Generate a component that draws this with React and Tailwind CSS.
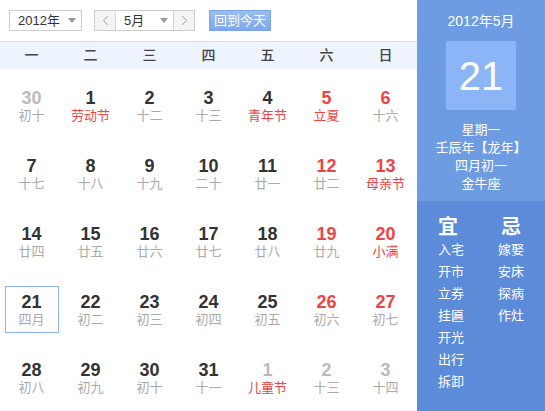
import React from 'react';
import { ChevronLeft, ChevronRight } from 'lucide-react';

const FONT = { fontFamily: '"Liberation Sans", Arial, "Noto Sans CJK SC", sans-serif' };

const weekDays = ['一', '二', '三', '四', '五', '六', '日'];

// n: 日期, l: 农历/节日, o: 非本月, r: 周末红色, f: 节日红色
const weeks = [
  [
    { n: 30, l: '初十', o: true },
    { n: 1, l: '劳动节', f: true },
    { n: 2, l: '十二' },
    { n: 3, l: '十三' },
    { n: 4, l: '青年节', f: true },
    { n: 5, l: '立夏', r: true, f: true },
    { n: 6, l: '十六', r: true },
  ],
  [
    { n: 7, l: '十七' },
    { n: 8, l: '十八' },
    { n: 9, l: '十九' },
    { n: 10, l: '二十' },
    { n: 11, l: '廿一' },
    { n: 12, l: '廿二', r: true },
    { n: 13, l: '母亲节', r: true, f: true },
  ],
  [
    { n: 14, l: '廿四' },
    { n: 15, l: '廿五' },
    { n: 16, l: '廿六' },
    { n: 17, l: '廿七' },
    { n: 18, l: '廿八' },
    { n: 19, l: '廿九', r: true },
    { n: 20, l: '小满', r: true, f: true },
  ],
  [
    { n: 21, l: '四月', sel: true },
    { n: 22, l: '初二' },
    { n: 23, l: '初三' },
    { n: 24, l: '初四' },
    { n: 25, l: '初五' },
    { n: 26, l: '初六', r: true },
    { n: 27, l: '初七', r: true },
  ],
  [
    { n: 28, l: '初八' },
    { n: 29, l: '初九' },
    { n: 30, l: '初十' },
    { n: 31, l: '十一' },
    { n: 1, l: '儿童节', o: true, f: true },
    { n: 2, l: '十三', o: true },
    { n: 3, l: '十四', o: true },
  ],
];

const yi = ['入宅', '开市', '立券', '挂匾', '开光', '出行', '拆卸'];
const ji = ['嫁娶', '安床', '探病', '作灶'];

const Arrow = () => (
  <span className="w-0 h-0 border-l-[4px] border-r-[4px] border-t-[5px] border-l-transparent border-r-transparent border-t-[#999]" />
);

const DayCell = ({ d }) => {
  const numColor = d.o ? 'text-[#bbbbbb]' : d.r ? 'text-[#ee4444]' : 'text-[#333333]';
  const lunarColor = d.f ? 'text-[#ee4444]' : 'text-[#aaaaaa]';
  return (
    <div className="flex items-center justify-center">
      <div
        className={`w-[54px] h-[47px] flex flex-col items-center pt-[5px] ${
          d.sel ? 'border border-[#8db4f0]' : 'border border-transparent'
        }`}
      >
        <span className={`text-[18px] leading-[20px] font-bold ${numColor}`}>{d.n}</span>
        <span className={`text-[13px] leading-[16px] ${lunarColor}`}>{d.l}</span>
      </div>
    </div>
  );
};

export default function App() {
  return (
    <div className="w-[545px] h-[411px] flex bg-white overflow-hidden" style={FONT}>
      {/* 左侧日历 */}
      <div className="w-[417px] flex flex-col">
        <div className="h-[43px] flex items-center pl-[9px] border-b border-[#d9dde5]">
          <div className="w-[73px] h-[21px] border border-[#cccccc] flex items-center justify-between pl-[8px] pr-[5px] text-[13px] text-[#333]">
            <span>2012年</span>
            <Arrow />
          </div>
          <div className="ml-[12px] h-[21px] flex border border-[#cccccc]">
            <div className="w-[21px] flex items-center justify-center bg-[#f4f4f4] border-r border-[#d6d6d6] text-[#999]">
              <ChevronLeft size={17} strokeWidth={1.3} />
            </div>
            <div className="w-[57px] flex items-center justify-between pl-[8px] pr-[5px] text-[13px] text-[#333] bg-white">
              <span>5月</span>
              <Arrow />
            </div>
            <div className="w-[21px] flex items-center justify-center bg-[#f4f4f4] border-l border-[#d6d6d6] text-[#999]">
              <ChevronRight size={17} strokeWidth={1.3} />
            </div>
          </div>
          <div className="ml-[14px] w-[62px] h-[21px] flex items-center justify-center bg-gradient-to-b from-[#9bbdf2] to-[#7ea8ec] border border-[#79a3e6] text-white text-[13px]">
            回到今天
          </div>
        </div>

        <div className="h-[27px] bg-[#eef4fd] pl-[2px] grid grid-cols-[repeat(7,59px)] items-center">
          {weekDays.map((w) => (
            <div key={w} className="text-center text-[14px] font-medium text-[#444]">
              {w}
            </div>
          ))}
        </div>

        <div className="pl-[2px] pt-[2px] grid grid-cols-[repeat(7,59px)] auto-rows-[68px]">
          {weeks.flat().map((d, i) => (
            <DayCell key={i} d={d} />
          ))}
        </div>
      </div>

      {/* 右侧详情 */}
      <div className="flex-1 flex flex-col text-white">
        <div className="h-[201px] bg-[#6d9ce2] flex flex-col items-center pt-[11px]">
          <div className="text-[14px] leading-[20px]">2012年5月</div>
          <div className="mt-[10px] w-[70px] h-[69px] bg-[#8bb5f6] rounded-[2px] flex items-center justify-center text-[40px] leading-none">
            21
          </div>
          <div className="mt-[11px] flex flex-col items-center text-[13px] leading-[18px]">
            <span>星期一</span>
            <span>壬辰年【龙年】</span>
            <span>四月初一</span>
            <span>金牛座</span>
          </div>
        </div>
        <div className="flex-1 bg-[#5b8bd9] flex pt-[14px] pl-[21px]">
          <div className="w-[60px] flex flex-col">
            <span className="text-[20px] leading-[24px] font-bold">宜</span>
            {yi.map((t) => (
              <span key={t} className="text-[13px] leading-[22px]">{t}</span>
            ))}
          </div>
          <div className="flex flex-col">
            <span className="text-[20px] leading-[24px] font-bold pl-[3px]">忌</span>
            {ji.map((t) => (
              <span key={t} className="text-[13px] leading-[22px]">{t}</span>
            ))}
          </div>
        </div>
      </div>
    </div>
  );
}
